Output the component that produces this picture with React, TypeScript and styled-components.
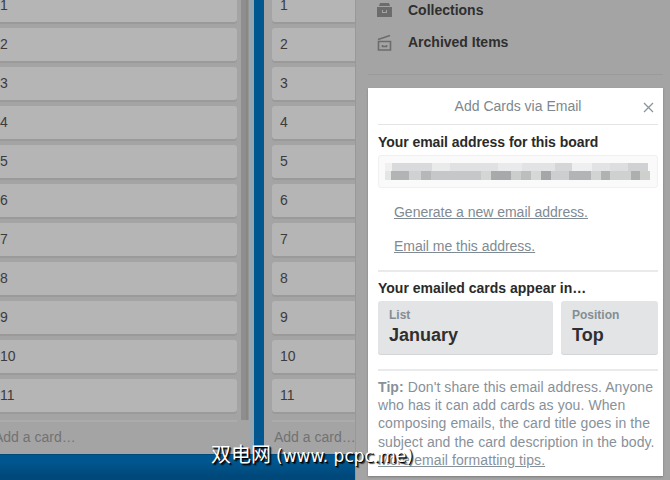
import styled, { createGlobalStyle } from 'styled-components'

const GlobalStyle = createGlobalStyle`
  html, body {
    margin: 0;
    padding: 0;
    background: #a4a4a4;
  }
  body {
    font-family: "Liberation Sans", Arial, sans-serif;
  }
`

const Page = styled.div`
  position: relative;
  display: flex;
  width: 670px;
  height: 480px;
  overflow: hidden;
`

const Board = styled.div`
  display: flex;
  align-items: flex-start;
  gap: 10px;
  width: 355px;
  height: 480px;
  flex: none;
  overflow: hidden;
  background: linear-gradient(#00568f 462px, #00487a 476px);
`

const List = styled.div<{ $first?: boolean }>`
  display: flex;
  flex: none;
  width: ${(p) => (p.$first ? '268px' : '200px')};
  height: 454px;
  margin-left: ${(p) => (p.$first ? '-14px' : '0')};
  padding-left: ${(p) => (p.$first ? '6px' : '8px')};
  box-sizing: border-box;
  background: #a4a4a4;
  border-right: ${(p) => (p.$first ? '4px solid #94a6b2' : 'none')};
  box-shadow: 0 1px 0 #004a7c;
`

const ListBody = styled.div`
  display: flex;
  flex-direction: column;
  flex: 1;
  min-width: 0;
`

const Cards = styled.div`
  display: flex;
  flex-direction: column;
  gap: 6px;
  margin-top: -11px;
`

const Card = styled.div`
  height: 33px;
  padding: 0 8px;
  flex: none;
  box-sizing: border-box;
  border-radius: 3px;
  background: #b5b5b5;
  box-shadow: 0 2px 0 #9a9a9a;
  color: #3c3c3c;
  font-size: 14px;
  line-height: 33px;
`

const AddCard = styled.div`
  margin-top: 8px;
  border-top: 2px solid #acacac;
  padding: 6px 2px 0;
  color: #727272;
  font-size: 14px;
  line-height: 18px;
  white-space: nowrap;
`

const Scrollbar = styled.div`
  flex: none;
  width: 8px;
  height: 420px;
  margin: 0 1px 0 4px;
  background: linear-gradient(90deg, #8e8e8e 5px, #8b8781 5px, #8b8781 7px, #959595 7px);
`

const Sidebar = styled.div`
  display: flex;
  flex-direction: column;
  flex: 1;
  min-width: 0;
  padding: 0 7px 4px 13px;
  background: #a4a4a4;
  box-shadow: inset 1px 0 0 #989898;
`

const MenuItem = styled.div`
  display: flex;
  align-items: center;
  gap: 16px;
  height: 32px;
  padding-left: 9px;
  color: #2f2f2f;
  font-size: 14px;
  font-weight: 700;
  svg {
    flex: none;
  }
`

const MenuList = styled.div`
  display: flex;
  flex-direction: column;
  margin-top: -6px;
`

const MenuRule = styled.div`
  height: 1px;
  margin: 16px 0 13px;
  background: #9a9a9a;
`

const Popover = styled.div`
  display: flex;
  flex-direction: column;
  flex: 1;
  padding: 0 5px 0 10px;
  background: #fff;
  box-shadow: 0 1px 2px rgba(0, 0, 0, 0.25);
`

const PopHeader = styled.div`
  position: relative;
  height: 36px;
  border-bottom: 1px solid #e2e4e6;
  color: #7d878e;
  font-size: 14px;
  line-height: 37px;
  text-align: center;
`

const CloseButton = styled.span`
  position: absolute;
  top: 14px;
  right: 4px;
  display: flex;
  color: #8b949a;
`

const SectionTitle = styled.div`
  color: #2a2a2a;
  font-size: 14px;
  font-weight: 700;
  line-height: 18px;
`

const EmailTitle = styled(SectionTitle)`
  margin-top: 8px;
  letter-spacing: -0.06px;
`

const EmailBox = styled.div`
  display: flex;
  align-items: center;
  justify-content: center;
  height: 33px;
  margin-top: 4px;
  box-sizing: border-box;
  border: 1px solid #f0f0f0;
  border-radius: 3px;
  background: #fafafa;
`

const Action = styled.a`
  align-self: flex-start;
  margin-left: 16px;
  color: #7f8a92;
  font-size: 14px;
  line-height: 18px;
  text-decoration: underline;
  letter-spacing: -0.02px;
`

const Actions = styled.div`
  display: flex;
  flex-direction: column;
  gap: 16px;
  padding: 15px 0 15px;
  border-bottom: 2px solid #e8eaeb;
`

const AppearTitle = styled(SectionTitle)`
  margin-top: 7px;
`

const Pickers = styled.div`
  display: flex;
  gap: 8px;
  margin-top: 4px;
  padding-bottom: 15px;
  border-bottom: 2px solid #e8eaeb;
`

const Picker = styled.div<{ $wide?: boolean }>`
  flex: ${(p) => (p.$wide ? '0 0 175px' : '1')};
  height: 53px;
  padding: 7px 11px;
  box-sizing: border-box;
  border-radius: 3px;
  background: #e2e4e6;
  box-shadow: 0 1px 0 #d3d5d7;
`

const PickerLabel = styled.div`
  color: #858d93;
  font-size: 12px;
  font-weight: 700;
  line-height: 15px;
`

const PickerValue = styled.div`
  color: #2f2f2f;
  font-size: 18px;
  font-weight: 700;
  line-height: 24px;
`

const Tip = styled.div`
  margin-top: 7px;
  color: #87919a;
  font-size: 14px;
  line-height: 18.2px;
  letter-spacing: 0.08px;
  b {
    font-weight: 700;
  }
  a {
    color: inherit;
    text-decoration: underline;
  }
`

const Watermark = styled.div`
  position: absolute;
  left: 211px;
  top: 440px;
  color: #fff;
  font-family: "Noto Sans CJK SC", "Noto Sans", sans-serif;
  font-size: 20px;
  line-height: 28px;
  white-space: nowrap;
  text-shadow: 1px 1px 0 #000, 2px 2px 1px rgba(0, 0, 0, 0.7);
  span {
    margin-left: 5px;
    font-family: "DejaVu Sans", sans-serif;
    font-size: 17px;
  }
`

const numbers = ['1', '2', '3', '4', '5', '6', '7', '8', '9', '10', '11']

// pixelated blur over the address: [x, width, colour]
const topBlocks: [number, number, string][] = [
  [0, 7, '#f0f0f0'], [7, 40, '#d8dadb'], [47, 18, '#e9ebeb'], [65, 48, '#dfe1e2'],
  [113, 24, '#e8eaeb'], [137, 33, '#e1e3e4'], [170, 17, '#d4d6d7'], [187, 20, '#eeeff0'],
  [207, 18, '#e2e3e4'], [225, 18, '#dcdedf'], [243, 20, '#cfd1d2'],
]
const bottomBlocks: [number, number, string][] = [
  [0, 6, '#e4e5e5'], [6, 18, '#b2b3b4'], [24, 12, '#d0d1d1'], [36, 10, '#b6b7b8'],
  [46, 50, '#c6c7c8'], [96, 10, '#d4d5d5'], [106, 20, '#a8a9aa'], [126, 10, '#cbcccc'],
  [136, 10, '#bcbdbe'], [146, 10, '#d6d7d7'], [156, 10, '#a5a6a7'], [166, 18, '#cdcecf'],
  [184, 22, '#b3b4b5'], [206, 10, '#d2d3d3'], [216, 9, '#b0b1b2'], [225, 21, '#cfd0d0'],
  [246, 9, '#adaeaf'], [255, 10, '#cdd0cc'],
]

function BlurredEmail() {
  return (
    <svg width="266" height="17" viewBox="0 0 266 17">
      {topBlocks.map(([x, w, c]) => (
        <rect key={x} x={x} y="0" width={w} height="8" fill={c} />
      ))}
      {bottomBlocks.map(([x, w, c]) => (
        <rect key={x} x={x} y="8" width={w} height="9" fill={c} />
      ))}
    </svg>
  )
}

function CollectionsIcon() {
  return (
    <svg width="15" height="16" viewBox="0 0 15 16" fill="#6c6c6c">
      <path d="M3 1h9l1 3H2z" />
      <path d="M0 5h15v10H0zM5 8v3h5V8H9v2H6V8z" fillRule="evenodd" />
    </svg>
  )
}

function ArchiveIcon() {
  return (
    <svg width="15" height="17" viewBox="0 0 15 17" fill="none" stroke="#6c6c6c" strokeWidth="1.6">
      <path d="M1 5.5 13 1.5" />
      <path d="M1.5 7.5h12v8.5h-12z" />
      <path d="M5.5 11v1.5h4V11" />
    </svg>
  )
}

export default function App() {
  return (
    <Page>
      <GlobalStyle />
      <Board>
        <List $first>
          <ListBody>
            <Cards>
              {numbers.map((n) => (
                <Card key={n}>{n}</Card>
              ))}
            </Cards>
            <AddCard>Add a card…</AddCard>
          </ListBody>
          <Scrollbar />
        </List>
        <List>
          <ListBody>
            <Cards>
              {numbers.map((n) => (
                <Card key={n}>{n}</Card>
              ))}
            </Cards>
            <AddCard>Add a card…</AddCard>
          </ListBody>
        </List>
      </Board>
      <Sidebar>
        <MenuList>
          <MenuItem>
            <CollectionsIcon />
            Collections
          </MenuItem>
          <MenuItem>
            <ArchiveIcon />
            Archived Items
          </MenuItem>
        </MenuList>
        <MenuRule />
        <Popover>
          <PopHeader>
            Add Cards via Email
            <CloseButton>
              <svg width="11" height="11" viewBox="0 0 11 11" stroke="currentColor" strokeWidth="1.3">
                <path d="M1 1l9 9M10 1l-9 9" />
              </svg>
            </CloseButton>
          </PopHeader>
          <EmailTitle>Your email address for this board</EmailTitle>
          <EmailBox>
            <BlurredEmail />
          </EmailBox>
          <Actions>
            <Action>Generate a new email address.</Action>
            <Action>Email me this address.</Action>
          </Actions>
          <AppearTitle>Your emailed cards appear in…</AppearTitle>
          <Pickers>
            <Picker $wide>
              <PickerLabel>List</PickerLabel>
              <PickerValue>January</PickerValue>
            </Picker>
            <Picker>
              <PickerLabel>Position</PickerLabel>
              <PickerValue>Top</PickerValue>
            </Picker>
          </Pickers>
          <Tip>
            <b>Tip:</b> Don't share this email address. Anyone who has it can add cards as you. When composing emails, the card title goes in the subject and the card description in the body. <a>More email formatting tips.</a>
          </Tip>
        </Popover>
      </Sidebar>
      <Watermark>
        双电网<span>(www. pcpc.me)</span>
      </Watermark>
    </Page>
  )
}
